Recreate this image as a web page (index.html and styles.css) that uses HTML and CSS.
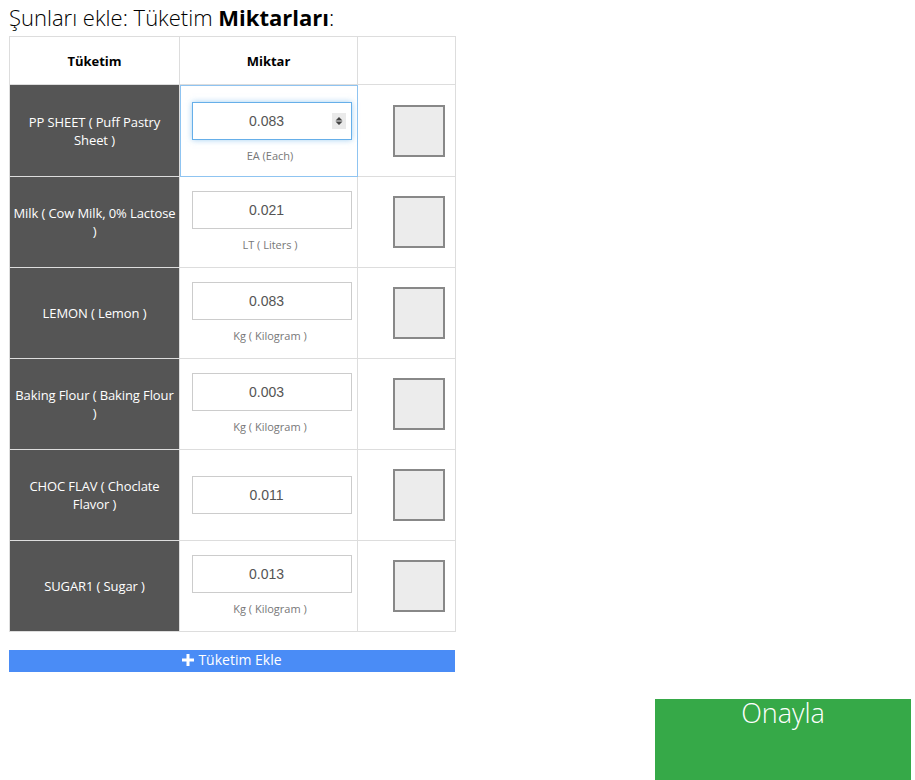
FILE: index.html
```html
<!DOCTYPE html>
<html lang="tr">
<head>
<meta charset="utf-8">
<title>Tüketim Miktarları</title>
<link rel="stylesheet" href="styles.css">
</head>
<body>
<div class="page">
  <h3 class="title">Şunları ekle: Tüketim <b>Miktarları</b>:</h3>
  <table class="grid">
    <colgroup><col class="c1"><col class="c2"><col class="c3"></colgroup>
    <thead>
      <tr><th>Tüketim</th><th>Miktar</th><th></th></tr>
    </thead>
    <tbody>
      <tr class="first">
        <td class="name">PP SHEET ( Puff Pastry Sheet )</td>
        <td class="qty focus">
          <div class="field">
            <div class="inputwrap">
              <input class="num active" type="text" value="0.083">
              <span class="spin"><svg width="10" height="12" viewBox="0 0 10 12"><path d="M5 2 L8.5 5.5 H1.5 Z M5 10 L8.5 6.5 H1.5 Z" fill="#444"/></svg></span>
            </div>
            <div class="unit">EA (Each)</div>
          </div>
        </td>
        <td class="chk"><span class="box"></span></td>
      </tr>
      <tr>
        <td class="name">Milk ( Cow Milk, 0% Lactose )</td>
        <td class="qty"><div class="field"><input class="num" type="text" value="0.021"><div class="unit">LT ( Liters )</div></div></td>
        <td class="chk"><span class="box"></span></td>
      </tr>
      <tr>
        <td class="name">LEMON ( Lemon )</td>
        <td class="qty"><div class="field"><input class="num" type="text" value="0.083"><div class="unit">Kg ( Kilogram )</div></div></td>
        <td class="chk"><span class="box"></span></td>
      </tr>
      <tr>
        <td class="name">Baking Flour ( Baking Flour )</td>
        <td class="qty"><div class="field"><input class="num" type="text" value="0.003"><div class="unit">Kg ( Kilogram )</div></div></td>
        <td class="chk"><span class="box"></span></td>
      </tr>
      <tr>
        <td class="name">CHOC FLAV ( Choclate Flavor )</td>
        <td class="qty"><div class="field"><input class="num" type="text" value="0.011"></div></td>
        <td class="chk"><span class="box"></span></td>
      </tr>
      <tr>
        <td class="name">SUGAR1 ( Sugar )</td>
        <td class="qty"><div class="field"><input class="num" type="text" value="0.013"><div class="unit">Kg ( Kilogram )</div></div></td>
        <td class="chk"><span class="box"></span></td>
      </tr>
    </tbody>
  </table>
  <button class="add" type="button"><svg class="plus" width="12" height="12" viewBox="0 0 12 12"><path d="M4.5 0 H7.5 V4.5 H12 V7.5 H7.5 V12 H4.5 V7.5 H0 V4.5 H4.5 Z" fill="#fff"/></svg> Tüketim Ekle</button>
  <div class="actions">
    <button class="confirm" type="button">Onayla</button>
  </div>
</div>
</body>
</html>
```

FILE: styles.css
```css
html, body {
  margin: 0;
  padding: 0;
  background: #fff;
}
body {
  font-family: "Open Sans", "DejaVu Sans", sans-serif;
  color: #000;
}
.page {
  padding: 0 4px 0 9px;
}
.title {
  margin: 0;
  height: 36px;
  font-size: 22px;
  font-weight: 300;
  line-height: 36px;
  color: #000;
  position: relative;
  top: -1px;
}
.title b {
  font-weight: 700;
}
.grid {
  border-collapse: collapse;
  table-layout: fixed;
  width: 446px;
}
.c1 { width: 170px; }
.c2 { width: 178px; }
.c3 { width: 98px; }
.grid th, .grid td {
  border: 1px solid #ddd;
}
.grid th {
  height: 47px;
  padding: 0;
  font-size: 13px;
  font-weight: 700;
  text-align: center;
  vertical-align: middle;
}
.grid td {
  height: 90px;
  padding: 0;
  vertical-align: middle;
}
.grid tr.first td {
  height: 91px;
}
.name {
  background: #555;
  color: #fff;
  font-size: 13px;
  line-height: 18px;
  text-align: center;
  padding: 0 2px !important;
  letter-spacing: -0.1px;
}
.qty.focus {
  outline: 1px solid #8fc4f1;
  outline-offset: -1px;
}
.qty.focus .field {
  padding-top: 5px;
}
.field {
  width: 160px;
  margin-left: 12px;
}
.inputwrap {
  position: relative;
}
.num {
  display: block;
  box-sizing: border-box;
  width: 160px;
  height: 38px;
  margin: 0;
  padding: 0 17px 0 6px;
  border: 1px solid #ccc;
  background: #fff;
  font-family: "Liberation Sans", Arial, sans-serif;
  font-size: 14px;
  color: #555;
  text-align: center;
  outline: none;
}
.num.active {
  border-color: #66afe9;
  box-shadow: 0 0 6px rgba(102, 175, 233, 0.6);
}
.spin {
  position: absolute;
  right: 6px;
  top: 11px;
  width: 14px;
  height: 16px;
  background: #eaeaea;
  display: flex;
  align-items: center;
  justify-content: center;
}
.unit {
  margin-top: 8px;
  padding-right: 4px;
  font-size: 11px;
  line-height: 16px;
  color: #777;
  text-align: center;
}
.chk {
  text-align: right;
  padding-right: 10px !important;
}
.box {
  display: inline-block;
  vertical-align: middle;
  box-sizing: border-box;
  width: 52px;
  height: 52px;
  border: 2px solid #888;
  background: #ececec;
}
.add {
  display: flex;
  align-items: center;
  justify-content: center;
  gap: 4px;
  box-sizing: border-box;
  width: 446px;
  height: 22px;
  margin-top: 18px;
  padding: 0 0 3px;
  border: none;
  background: #4a8cf6;
  color: #fff;
  font-family: "Open Sans", sans-serif;
  font-size: 14px;
  line-height: 18px;
}
.plus {
  margin-top: 1px;
}
.actions {
  display: flex;
  justify-content: flex-end;
  margin-top: 27px;
}
.confirm {
  width: 256px;
  height: 90px;
  border: none;
  padding: 0;
  background: #36a948;
  color: #fff;
  font-family: "Open Sans", sans-serif;
  font-size: 27px;
  font-weight: 300;
  line-height: 28px;
  text-align: center;
  display: flex;
  justify-content: center;
  align-items: flex-start;
}
```
